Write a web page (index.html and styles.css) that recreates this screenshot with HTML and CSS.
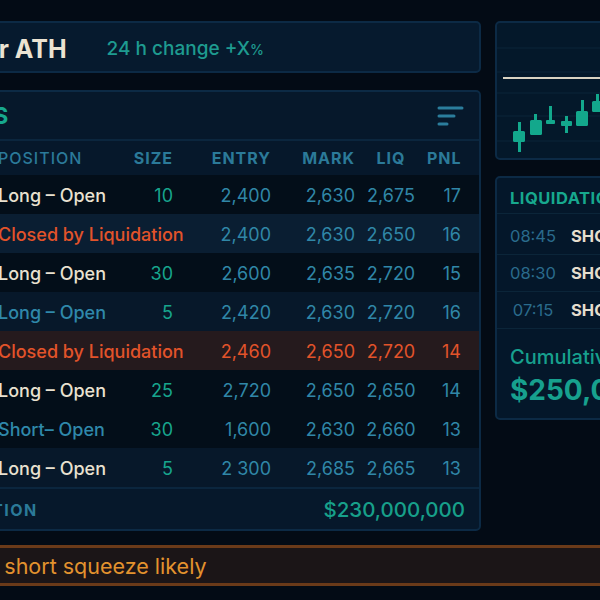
FILE: index.html
```html
<!DOCTYPE html>
<html lang="en">
<head>
<meta charset="utf-8">
<title>ETH Positions Monitor</title>
<link rel="stylesheet" href="styles.css">
</head>
<body>
<div class="screen">
  <div class="board">
    <div class="main-col">
      <header class="panel ticker">
        <h1 class="ticker-title">ETH near ATH</h1>
        <span class="ticker-change">24 h change +X<small>%</small></span>
      </header>

      <section class="panel positions">
        <div class="positions-head">
          <h2 class="positions-title">POSITIONS</h2>
          <svg class="filter-icon" width="28" height="22" viewBox="0 0 28 22" aria-hidden="true">
            <line x1="2" y1="3" x2="25" y2="3"/>
            <line x1="2" y1="11" x2="17" y2="11"/>
            <line x1="2" y1="19" x2="10" y2="19"/>
          </svg>
        </div>

        <div class="grid thead">
          <span class="c-pair">PAIR</span>
          <span class="c-pos">POSITION</span>
          <span class="c-size">SIZE</span>
          <span class="c-entry">ENTRY</span>
          <span class="c-mark">MARK</span>
          <span class="c-liq">LIQ</span>
          <span class="c-pnl">PNL</span>
        </div>

        <div class="grid row bg-dark">
          <span class="c-pair">ETH</span>
          <span class="c-pos t-cream">Long – Open</span>
          <span class="c-size">10</span>
          <span class="c-entry">2,400</span>
          <span class="c-mark">2,630</span>
          <span class="c-liq">2,675</span>
          <span class="c-pnl">17</span>
        </div>
        <div class="grid row bg-blue">
          <span class="c-pair">ETH</span>
          <span class="c-pos t-red">Closed by Liquidation</span>
          <span class="c-size"></span>
          <span class="c-entry">2,400</span>
          <span class="c-mark">2,630</span>
          <span class="c-liq">2,650</span>
          <span class="c-pnl">16</span>
        </div>
        <div class="grid row bg-dark">
          <span class="c-pair">ETH</span>
          <span class="c-pos t-cream">Long – Open</span>
          <span class="c-size">30</span>
          <span class="c-entry">2,600</span>
          <span class="c-mark">2,635</span>
          <span class="c-liq">2,720</span>
          <span class="c-pnl">15</span>
        </div>
        <div class="grid row bg-soft">
          <span class="c-pair">ETH</span>
          <span class="c-pos t-blue">Long – Open</span>
          <span class="c-size">5</span>
          <span class="c-entry">2,420</span>
          <span class="c-mark">2,630</span>
          <span class="c-liq">2,720</span>
          <span class="c-pnl">16</span>
        </div>
        <div class="grid row bg-liq liquidated">
          <span class="c-pair">ETH</span>
          <span class="c-pos t-red">Closed by Liquidation</span>
          <span class="c-size"></span>
          <span class="c-entry">2,460</span>
          <span class="c-mark">2,650</span>
          <span class="c-liq">2,720</span>
          <span class="c-pnl">14</span>
        </div>
        <div class="grid row bg-dark">
          <span class="c-pair">ETH</span>
          <span class="c-pos t-cream">Long – Open</span>
          <span class="c-size">25</span>
          <span class="c-entry">2,720</span>
          <span class="c-mark">2,650</span>
          <span class="c-liq">2,650</span>
          <span class="c-pnl">14</span>
        </div>
        <div class="grid row bg-dark">
          <span class="c-pair">ETH</span>
          <span class="c-pos t-blue">Short– Open</span>
          <span class="c-size">30</span>
          <span class="c-entry">1,600</span>
          <span class="c-mark">2,630</span>
          <span class="c-liq">2,660</span>
          <span class="c-pnl">13</span>
        </div>
        <div class="grid row bg-soft">
          <span class="c-pair">ETH</span>
          <span class="c-pos t-cream">Long – Open</span>
          <span class="c-size">5</span>
          <span class="c-entry">2 300</span>
          <span class="c-mark">2,685</span>
          <span class="c-liq">2,665</span>
          <span class="c-pnl">13</span>
        </div>

        <div class="positions-foot">
          <span class="foot-label">IN LIQUIDATION</span>
          <span class="foot-value">$230,000,000</span>
        </div>
      </section>
    </div>

    <aside class="side-col">
      <div class="panel chart">
        <svg class="chart-svg" width="240" height="135" viewBox="0 0 240 135" aria-hidden="true">
          <g class="grid-lines">
            <line x1="0" y1="25" x2="240" y2="25"/>
            <line x1="0" y1="49" x2="240" y2="49"/>
            <line x1="0" y1="70" x2="240" y2="70"/>
            <line x1="0" y1="93" x2="240" y2="93"/>
            <line x1="0" y1="118" x2="240" y2="118"/>
          </g>
          <line class="ath-line" x1="6" y1="55" x2="240" y2="55"/>
          <g class="candles">
            <rect x="21" y="99" width="3" height="30"/>
            <rect x="16" y="108" width="12" height="11" rx="1.5"/>
            <rect x="37" y="91" width="3" height="20"/>
            <rect x="33" y="97" width="12" height="15" rx="1.5"/>
            <rect x="52" y="83" width="3" height="17"/>
            <rect x="49" y="97" width="9" height="4" rx="1"/>
            <rect x="68" y="93" width="3" height="17"/>
            <rect x="64" y="98" width="11" height="5" rx="1"/>
            <rect x="84" y="77" width="3" height="20"/>
            <rect x="79" y="88" width="12" height="15" rx="1.5"/>
            <rect x="99" y="71" width="3" height="16"/>
            <rect x="95" y="78" width="11" height="11" rx="1.5"/>
            <rect x="115" y="64" width="3" height="24"/>
            <rect x="111" y="70" width="11" height="13" rx="1.5"/>
          </g>
        </svg>
      </div>

      <div class="panel liqs">
        <h3 class="liqs-title">LIQUIDATIONS</h3>
        <div class="liq-row"><span class="liq-time">08:45</span><span class="liq-what">SHORT 1,200 ETH</span></div>
        <div class="liq-row"><span class="liq-time">08:30</span><span class="liq-what">SHORT 850 ETH</span></div>
        <div class="liq-row"><span class="liq-time">07:15</span><span class="liq-what">SHORT 640 ETH</span></div>
        <div class="liq-total">
          <span class="liq-total-label">Cumulative liquidations</span>
          <span class="liq-total-value">$250,000,000</span>
        </div>
      </div>
    </aside>
  </div>

  <div class="alert">
    <span class="alert-text">Alert: short squeeze likely</span>
  </div>
</div>
</body>
</html>
```

FILE: styles.css
```css
* {
  box-sizing: border-box;
  margin: 0;
  padding: 0;
}

html,
body {
  background: #030b15;
  overflow: hidden;
}

body {
  font-family: Inter, "Noto Sans", sans-serif;
  color: #e9e1d0;
}

.screen {
  width: 600px;
  height: 600px;
  overflow: hidden;
  background: #030b15;
}

/* two-column dashboard, scrolled slightly to the left */
.board {
  display: flex;
  align-items: flex-start;
  gap: 14px;
  margin-left: -120px;
  padding-top: 21px;
}

.main-col {
  flex: none;
  width: 601px;
  display: flex;
  flex-direction: column;
  gap: 17px;
}

.side-col {
  flex: none;
  width: 240px;
  display: flex;
  flex-direction: column;
  gap: 16px;
}

.panel {
  background: #05182a;
  border: 2px solid #0c2a45;
  border-radius: 5px;
}

/* ticker header */
.ticker {
  height: 52px;
  display: flex;
  align-items: center;
  gap: 40px;
  padding: 3px 0 0 15px;
  background: #061a2e;
}

.ticker-title {
  font-size: 25px;
  font-weight: 700;
  color: #ebe3d2;
}

.ticker-change {
  font-size: 19px;
  font-weight: 500;
  color: #1e9b90;
}

.ticker-change small {
  font-size: 14px;
}

/* positions table */
.positions {
  background: #06182b;
}

.positions-head {
  height: 49px;
  display: flex;
  align-items: center;
  justify-content: space-between;
  padding: 0 14px 0 0;
  border-bottom: 2px solid #0b263e;
}

.positions-title {
  font-size: 23px;
  font-weight: 700;
  color: #17a88e;
}

.filter-icon line {
  stroke: #2b7d9c;
  stroke-width: 3;
  stroke-linecap: round;
}

.grid {
  display: grid;
  grid-template-columns: 100px 130px 45px 98px 84px 72px 34px;
  align-items: center;
  padding: 0 18px 0 16px;
  white-space: nowrap;
}

.thead {
  height: 34px;
  font-size: 16px;
  font-weight: 700;
  letter-spacing: 1px;
  color: #2b7a99;
}

.row {
  height: 39px;
  padding-top: 1px;
  font-size: 18px;
  color: #3087a7;
}

.c-pair {
  text-align: left;
}

.c-pos {
  font-weight: 500;
}

.c-size,
.c-entry,
.c-mark,
.c-pnl {
  text-align: right;
}

.c-liq {
  text-align: center;
}

.row .c-size {
  color: #17a58d;
}

.t-cream {
  color: #e9e1d0;
}

.t-red {
  color: #e2532a;
}

.t-blue {
  color: #2f88aa;
}

.bg-dark {
  background: #030e19;
}

.bg-blue {
  background: #0a1e32;
}

.bg-soft {
  background: #07182a;
}

.bg-liq {
  background: #251a1d;
}

.liquidated {
  color: #e2532a;
}

.positions-foot {
  height: 42px;
  display: flex;
  align-items: center;
  justify-content: space-between;
  padding: 1px 14px 0 11px;
  border-top: 2px solid #0b263e;
}

.foot-label {
  font-size: 16px;
  font-weight: 700;
  letter-spacing: 1.5px;
  color: #2b7a99;
}

.foot-value {
  font-size: 20.5px;
  font-weight: 500;
  color: #17a08a;
}

/* price chart */
.chart {
  height: 139px;
  background: #04182a;
  overflow: hidden;
}

.chart-svg {
  display: block;
}

.grid-lines line {
  stroke: #0b2538;
  stroke-width: 1;
}

.ath-line {
  stroke: #d9d3c2;
  stroke-width: 2;
}

.candles rect {
  fill: #13a88c;
}

/* recent liquidations */
.liqs {
  height: 244px;
  background: #04172a;
  overflow: hidden;
  white-space: nowrap;
}

.liqs-title {
  height: 36px;
  display: flex;
  align-items: center;
  padding: 5px 0 0 13px;
  font-size: 16.5px;
  font-weight: 700;
  letter-spacing: 0.5px;
  color: #17a88e;
  border-bottom: 1px solid #0b2539;
}

.liq-row {
  height: 37px;
  display: flex;
  align-items: center;
  gap: 14px;
  padding-left: 12px;
  border-bottom: 1px solid #0b2539;
}

.liq-row:first-of-type {
  height: 41px;
  padding-top: 3px;
}

.liq-time {
  width: 48px;
  text-align: center;
  font-size: 16.5px;
  color: #2a6b8c;
}

.liq-what {
  font-size: 16.5px;
  font-weight: 700;
  color: #e6dece;
}

.liq-total {
  display: flex;
  flex-direction: column;
  gap: 4px;
  padding: 16px 0 0 13px;
}

.liq-total-label {
  font-size: 20px;
  font-weight: 500;
  color: #17a08e;
}

.liq-total-value {
  font-size: 28px;
  font-weight: 700;
  color: #17a08e;
}

/* alert strip */
.alert {
  display: flex;
  align-items: center;
  height: 41px;
  width: 900px;
  margin: 14px 0 0 -120px;
  padding: 1px 0 0 64px;
  background: #1b1517;
  border-top: 3px solid #6a3a19;
  border-bottom: 3px solid #6a3a19;
}

.alert-text {
  font-size: 21.5px;
  color: #e3922e;
}
```
